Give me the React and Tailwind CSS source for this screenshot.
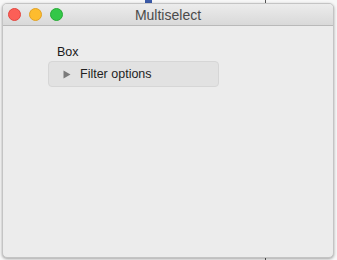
export default function App() {
  return (
    <div className="relative w-[337px] h-[260px] bg-[#f7f7f7] overflow-hidden font-['Liberation_Sans',Arial,sans-serif]">
      {/* bits of the desktop behind the window */}
      <div className="absolute left-[145px] top-0 w-[7px] h-[3px] bg-[#3a5aa8]" />
      <div className="absolute left-[265px] top-0 w-px h-[4px] bg-[#555]" />
      <div className="absolute left-[265px] bottom-0 w-px h-[3px] bg-[#555]" />

      <div className="absolute left-[2px] top-[3px] w-[332px] h-[255px] rounded-[5px] border border-[#c4c4c4] bg-[#ececec] shadow-[0_1px_3px_rgba(0,0,0,0.35)] overflow-hidden flex flex-col">
        {/* title bar */}
        <div className="relative h-[22px] shrink-0 bg-gradient-to-b from-[#ececec] to-[#d9d9d9] border-b border-[#b9b9b9] flex items-center justify-center">
          <div className="absolute left-[5px] top-[4px] flex gap-[8px]">
            <span className="w-[13px] h-[13px] rounded-full bg-[#fc5f57] border border-[#e2463f]" />
            <span className="w-[13px] h-[13px] rounded-full bg-[#fdbc2e] border border-[#e0a125]" />
            <span className="w-[13px] h-[13px] rounded-full bg-[#33c748] border border-[#27aa35]" />
          </div>
          <span className="text-[14px] text-[#4b4b4b] leading-none mt-[1px]">Multiselect</span>
        </div>

        {/* content */}
        <div className="flex-1 pl-[45px] pt-[19px]">
          <div className="ml-[9px] text-[12.5px] leading-[15px] text-[#1a1a1a]">Box</div>
          <div className="mt-[1px] w-[171px] h-[26px] rounded-[4px] bg-[#e2e2e2] border border-[#d6d6d6] flex items-center pl-[14px]">
            <svg width="8" height="9" viewBox="0 0 8 9" className="shrink-0">
              <path d="M0.5 0.5 L7.5 4.5 L0.5 8.5 Z" fill="#7a7a7a" />
            </svg>
            <span className="ml-[9px] text-[12.5px] text-[#1f1f1f]">Filter options</span>
          </div>
        </div>
      </div>
    </div>
  );
}
